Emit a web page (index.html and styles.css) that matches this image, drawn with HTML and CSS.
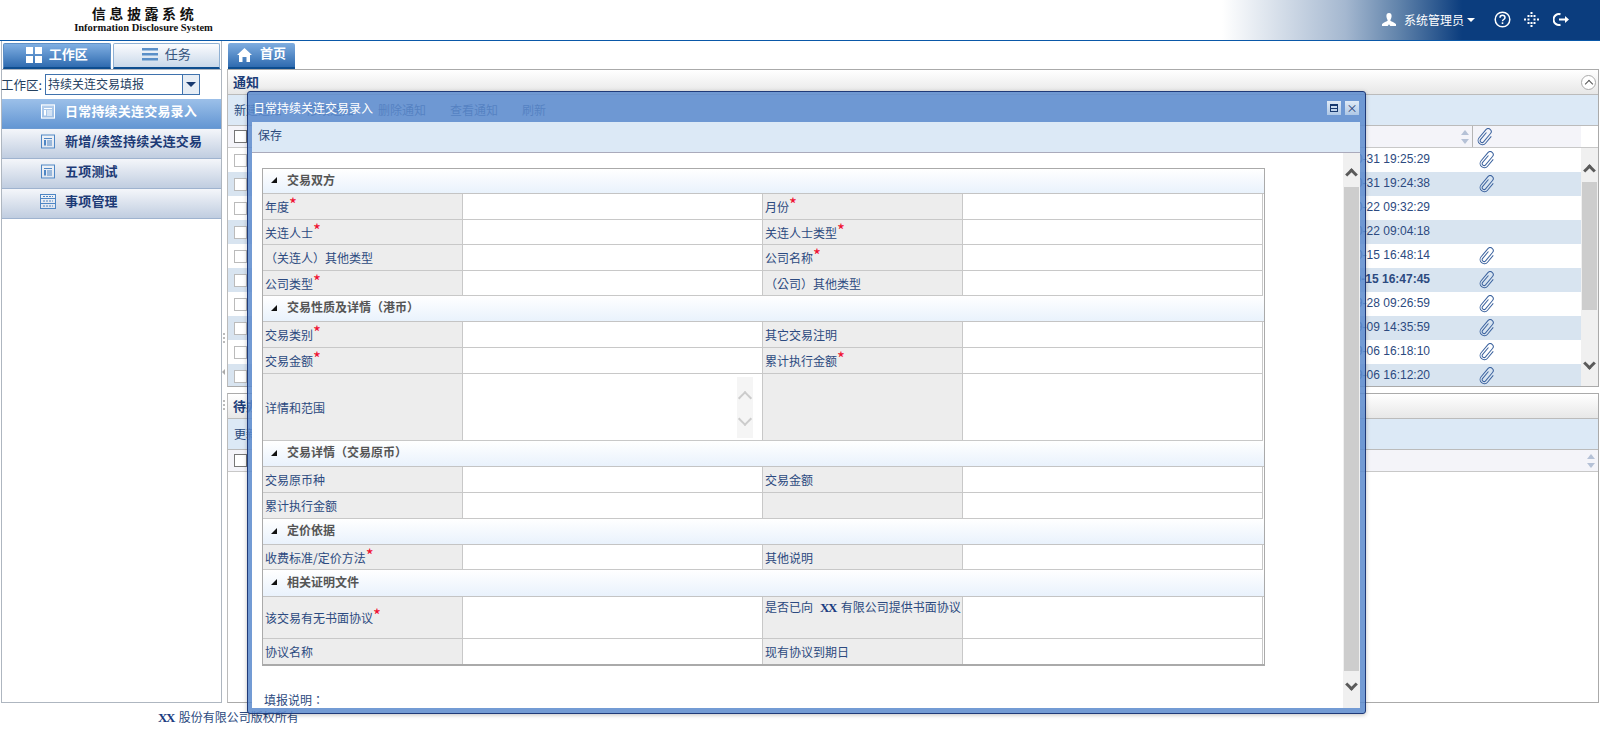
FILE: index.html
```html
<!DOCTYPE html>
<html lang="zh">
<head>
<meta charset="utf-8">
<title>信息披露系统</title>
<link rel="stylesheet" href="styles.css">
</head>
<body>
<svg class="defs" width="0" height="0">
  <symbol id="clip" viewBox="0 0 18 18">
    <g transform="rotate(40 9 9)"><path d="M7.2 4.6v9a1.9 1.9 0 0 0 3.8 0V2.8a3 3 0 0 0-6 0v10.6a4.2 4.2 0 0 0 8.4 0V4.5" fill="none" stroke="currentColor" stroke-width="1"/></g>
  </symbol>
  <symbol id="doc" viewBox="0 0 14 14">
    <rect x=".5" y=".5" width="13" height="13" fill="none" stroke="currentColor"/>
    <path d="M3 3.5h8v1H3zM3 5.5h2v5.5H3zM6 6h5v1H6zM6 8h5v1H6zM6 10h5v1H6z" fill="currentColor"/>
  </symbol>
</svg>

<header class="topbar">
  <div class="logo">
    <div class="logo-cn">信息披露系统</div>
    <div class="logo-en">Information Disclosure System</div>
  </div>
  <div class="topbar-tools">
    <svg class="ico-user" width="14" height="13" viewBox="0 0 14 13"><path d="M7 0c1.8 0 2.6 1.3 2.6 3S8.700 6.500 8.300 7.200c0 1 3.700 2 5.700 3.800V13H8.300L7 11.300 5.700 13H0v-2c2-1.800 5.700-2.800 5.700-3.800C5.300 6.500 4.400 4.700 4.400 3S5.200 0 7 0z" fill="#fff"/></svg>
    <span class="user-name">系统管理员</span>
    <span class="caret"></span>
    <svg class="ico-help" width="17" height="17" viewBox="0 0 17 17"><circle cx="8.500" cy="8.500" r="7.300" fill="none" stroke="#fff" stroke-width="1.500"/><path d="M6 6.700c0-3.200 5-3.200 5 0 0 1.800-2.500 1.800-2.500 3.500" fill="none" stroke="#fff" stroke-width="1.500"/><rect x="7.700" y="11.300" width="1.600" height="1.700" fill="#fff"/></svg>
    <svg class="ico-dots" width="15" height="15" viewBox="0 0 15 15" fill="#fff"><rect x="6.500" y="0" width="2" height="2"/><rect x="3.500" y="3" width="2" height="2"/><rect x="6.500" y="3" width="2" height="2"/><rect x="9.500" y="3" width="2" height="2"/><rect x="0" y="6.500" width="2" height="2"/><rect x="3.500" y="6.500" width="2" height="2"/><rect x="9.500" y="6.500" width="2" height="2"/><rect x="13" y="6.500" width="2" height="2"/><rect x="3.500" y="10" width="2" height="2"/><rect x="6.500" y="10" width="2" height="2"/><rect x="9.500" y="10" width="2" height="2"/><rect x="6.500" y="13" width="2" height="2"/></svg>
    <svg class="ico-exit" width="16" height="15" viewBox="0 0 16 15"><path d="M7.500 2.200A5.500 5.500 0 1 0 7.500 12.800" fill="none" stroke="#fff" stroke-width="2"/><path d="M6 6.500h6V4l4 3.500-4 3.500V8.500H6z" fill="#fff"/></svg>
  </div>
</header>

<main class="main">
  <aside class="side">
    <div class="side-tabs">
      <div class="side-tab active">
        <svg width="16" height="16" viewBox="0 0 16 16" fill="#fff"><rect width="7" height="7"/><rect x="9" width="7" height="7"/><rect y="9" width="7" height="7"/><rect x="9" y="9" width="7" height="7"/></svg>
        <span>工作区</span>
      </div>
      <div class="side-tab">
        <svg width="16" height="13" viewBox="0 0 16 13" fill="#5a8fc8"><rect width="16" height="2.500"/><rect y="5" width="16" height="2.500"/><rect y="10" width="16" height="2.500"/></svg>
        <span>任务</span>
      </div>
    </div>
    <div class="workspace">
      <span class="ws-label">工作区:</span>
      <div class="ws-select"><span class="ws-value">持续关连交易填报</span><span class="ws-btn"></span></div>
    </div>
    <nav class="menu">
      <div class="menu-item active"><svg class="mi" width="14" height="15"><use href="#doc"/></svg><span>日常持续关连交易录入</span></div>
      <div class="menu-item"><svg class="mi" width="14" height="15"><use href="#doc"/></svg><span>新增/续签持续关连交易</span></div>
      <div class="menu-item"><svg class="mi" width="14" height="15"><use href="#doc"/></svg><span>五项测试</span></div>
      <div class="menu-item">
        <svg class="mi wide" width="16" height="15" viewBox="0 0 16 15"><rect x=".5" y=".5" width="15" height="14" fill="none" stroke="currentColor"/><path d="M1 4.500h14M1 9.500h14" stroke="currentColor"/><path d="M3 2.500h10M3 7h10M3 12h10" stroke="currentColor" stroke-dasharray="2 1"/></svg>
        <span>事项管理</span>
      </div>
    </nav>
  </aside>

  <div class="splitter">
    <span class="grip g1"></span>
    <span class="split-arrow"></span>
    <span class="grip g2"></span>
  </div>

  <section class="content">
    <div class="page-tabs">
      <div class="page-tab">
        <svg width="15" height="14" viewBox="0 0 15 14" fill="#fff"><path d="M7.500 0L15 7h-2v7H9.500V9h-4v5H2V7H0z"/></svg>
        <span>首页</span>
      </div>
    </div>
    <div class="panel panel-top">
      <div class="panel-head"><span>通知</span><span class="collapse"></span></div>
      <div class="panel-bar">
        <span>新建通知</span><span>修改通知</span><span>删除通知</span><span>查看通知</span><span>刷新</span>
      </div>
      <div class="thead">
        <span class="chk dark"></span>
        <span class="th-fill"></span>
        <span class="sort"></span>
        <span class="th-clip"><svg width="18" height="18"><use href="#clip"/></svg></span>
      </div>
      <div class="tbody-wrap">
        <div class="tbody">
          <div class="tr"><span class="chk"></span><span class="date">2017-10-31 19:25:29</span><span class="clipcell"><svg width="18" height="18"><use href="#clip"/></svg></span></div>
          <div class="tr alt"><span class="chk"></span><span class="date">2017-10-31 19:24:38</span><span class="clipcell"><svg width="18" height="18"><use href="#clip"/></svg></span></div>
          <div class="tr"><span class="chk"></span><span class="date">2017-10-22 09:32:29</span><span class="clipcell"></span></div>
          <div class="tr alt"><span class="chk"></span><span class="date">2017-10-22 09:04:18</span><span class="clipcell"></span></div>
          <div class="tr"><span class="chk"></span><span class="date">2017-10-15 16:48:14</span><span class="clipcell"><svg width="18" height="18"><use href="#clip"/></svg></span></div>
          <div class="tr alt bold"><span class="chk"></span><span class="date">2017-10-15 16:47:45</span><span class="clipcell"><svg width="18" height="18"><use href="#clip"/></svg></span></div>
          <div class="tr"><span class="chk"></span><span class="date">2017-09-28 09:26:59</span><span class="clipcell"><svg width="18" height="18"><use href="#clip"/></svg></span></div>
          <div class="tr alt"><span class="chk"></span><span class="date">2017-09-09 14:35:59</span><span class="clipcell"><svg width="18" height="18"><use href="#clip"/></svg></span></div>
          <div class="tr"><span class="chk"></span><span class="date">2017-09-06 16:18:10</span><span class="clipcell"><svg width="18" height="18"><use href="#clip"/></svg></span></div>
          <div class="tr alt"><span class="chk"></span><span class="date">2017-09-06 16:12:20</span><span class="clipcell"><svg width="18" height="18"><use href="#clip"/></svg></span></div>
        </div>
        <div class="vscroll">
          <span class="chev up"></span>
          <span class="thumb"></span>
          <span class="chev down"></span>
        </div>
      </div>
    </div>
    <div class="panel panel-bottom">
      <div class="panel-head"><span>待办</span></div>
      <div class="panel-bar"><span>更新</span></div>
      <div class="thead full">
        <span class="chk dark"></span>
        <span class="th-fill"></span>
        <span class="sort"></span>
      </div>
    </div>
  </section>
</main>

<footer class="foot"><b>XX</b><span class="foot-text">股份有限公司版权所有</span></footer>

<div class="modal">
  <div class="modal-title">
    <span>日常持续关连交易录入</span>
    <span class="win-btns">
      <span class="win-btn"><i class="restore"></i></span>
      <span class="win-btn close">×</span>
    </span>
  </div>
  <div class="modal-inner">
    <div class="modal-bar">保存</div>
    <div class="modal-body">
      <div class="form">
        <div class="sec first"><i class="tri"></i>交易双方</div>
        <div class="row h26"><div class="lb">年度<em>*</em></div><div class="val"></div><div class="lb">月份<em>*</em></div><div class="val"></div></div>
        <div class="row h25"><div class="lb">关连人士<em>*</em></div><div class="val"></div><div class="lb">关连人士类型<em>*</em></div><div class="val"></div></div>
        <div class="row h26"><div class="lb tc" lang="zh-Hant">（关连人）其他类型</div><div class="val"></div><div class="lb">公司名称<em>*</em></div><div class="val"></div></div>
        <div class="row h25"><div class="lb">公司类型<em>*</em></div><div class="val"></div><div class="lb tc" lang="zh-Hant">（公司）其他类型</div><div class="val"></div></div>
        <div class="sec tc" lang="zh-Hant"><i class="tri"></i>交易性质及详情（港币）</div>
        <div class="row h26"><div class="lb">交易类别<em>*</em></div><div class="val"></div><div class="lb">其它交易注明</div><div class="val"></div></div>
        <div class="row h26"><div class="lb">交易金额<em>*</em></div><div class="val"></div><div class="lb">累计执行金额<em>*</em></div><div class="val"></div></div>
        <div class="row h67"><div class="lb">详情和范围</div><div class="val ta"><span class="ta-scroll"><span class="chev up light"></span><span class="chev down light"></span></span></div><div class="lb"></div><div class="val"></div></div>
        <div class="sec tc" lang="zh-Hant"><i class="tri"></i>交易详情（交易原币）</div>
        <div class="row h26"><div class="lb">交易原币种</div><div class="val"></div><div class="lb">交易金额</div><div class="val"></div></div>
        <div class="row h26"><div class="lb">累计执行金额</div><div class="val"></div><div class="lb"></div><div class="val"></div></div>
        <div class="sec"><i class="tri"></i>定价依据</div>
        <div class="row h25"><div class="lb">收费标准/定价方法<em>*</em></div><div class="val"></div><div class="lb">其他说明</div><div class="val"></div></div>
        <div class="sec tall"><i class="tri"></i>相关证明文件</div>
        <div class="row h42"><div class="lb">该交易有无书面协议<em>*</em></div><div class="val"></div><div class="lb top"><span>是否已向<b class="xx">XX</b>有限公司提供书面协议</span></div><div class="val"></div></div>
        <div class="row h25 last"><div class="lb">协议名称</div><div class="val"></div><div class="lb">现有协议到期日</div><div class="val"></div></div>
      </div>
      <div class="note tc" lang="zh-Hant">填报说明：</div>
      <div class="vscroll modal-scroll">
        <span class="chev up"></span>
        <span class="thumb"></span>
        <span class="chev down"></span>
      </div>
    </div>
  </div>
</div>
</body>
</html>
```
FILE: styles.css
```css
* { box-sizing: border-box; }
html, body { margin: 0; padding: 0; }
body {
  width: 1600px;
  height: 729px;
  overflow: hidden;
  position: relative;
  display: flex;
  flex-direction: column;
  background: #fff;
  color: #1c3d78;
  font: 12px "Noto Sans CJK SC", "Liberation Sans", sans-serif;
}
.defs { position: absolute; }
.tc { font-family: "Noto Sans CJK TC", "Noto Sans CJK SC", sans-serif; }

/* top bar */
.topbar {
  height: 41px;
  flex: none;
  display: flex;
  align-items: center;
  justify-content: space-between;
  border-bottom: 1px solid #0a58a8;
  background: linear-gradient(90deg, #fff 0, #fff 1222px, #a5b8d0 1345px, #5f82aa 1400px, #0b3d7e 1462px, #0b3d7e 100%);
}
.logo { width: 140px; margin-left: 74px; text-align: center; color: #111; align-self: flex-start; }
.logo-cn { font-size: 14px; font-weight: 700; letter-spacing: 3.6px; line-height: 16px; margin-top: 5px; padding-left: 1px; }
.logo-en { font: 700 10.500px/11px "Liberation Serif", serif; white-space: nowrap; margin-top: 1px; margin-left: -1px; }
.topbar-tools { display: flex; align-items: center; padding-right: 31px; color: #fff; padding-bottom: 1px; }
.user-name { margin-left: 8px; font-size: 12px; padding-bottom: 1px; }
.caret { margin-left: 3px; border: 4px solid transparent; border-top: 4px solid #fff; border-bottom: 0; width: 0; height: 0; }
.ico-help { margin-left: 19px; }
.ico-dots { margin-left: 13px; }
.ico-exit { margin-left: 14px; }

/* main layout */
.main { flex: none; height: 662px; display: flex; }
.side {
  width: 221px;
  margin-left: 1px;
  flex: none;
  border: 1px solid #aeb6c0;
  border-top: 0;
  display: flex;
  flex-direction: column;
}
.side-tabs { display: flex; gap: 2px; padding: 2px 1px 0 1px; height: 28px; flex: none; }
.side-tab {
  flex: 1;
  height: 26px;
  display: flex;
  align-items: center;
  justify-content: center;
  gap: 7px;
  font-size: 13px;
  color: #35557f;
  background: linear-gradient(#fbfcfe, #c9d8ea);
  border: 1px solid #8fb0d3;
  border-bottom: 2px solid #0d4d8f;
  border-radius: 2px 2px 0 0;
}
.side-tab span { padding-bottom: 5px; }
.side-tab svg { margin-bottom: 2px; }
.side-tab.active { background: linear-gradient(#80afe2, #2f6bb0); color: #fff; font-weight: 700; border-color: #5d8fc6; border-bottom-color: #0d4d8f; }
.workspace { height: 30px; flex: none; display: flex; align-items: center; border-top: 1px solid #aeb6c0; }
.ws-label { font-size: 12.500px; width: 43px; color: #24405f; white-space: nowrap; margin-left: -1px; padding-bottom: 1px; margin-right: 1px; }
.ws-select { width: 155px; height: 21px; border: 1px solid #3f72ad; display: flex; justify-content: space-between; }
.ws-value { padding-left: 2px; line-height: 18px; font-size: 12px; color: #24405f; }
.ws-btn { width: 17px; border-left: 1px solid #3f72ad; background: #e6edf5; position: relative; }
.ws-btn::after { content: ""; position: absolute; left: 3px; top: 7px; border: 5px solid transparent; border-top: 5px solid #17396f; border-bottom: 0; }
.menu { display: flex; flex-direction: column; }
.menu-item {
  height: 30px;
  display: flex;
  align-items: center;
  padding-left: 39px;
  font-size: 13px;
  letter-spacing: .2px;
  font-weight: 700;
  color: #1c3a76;
  background: linear-gradient(#f4f6fa, #c0cde0);
  border-bottom: 1px solid #9fb3cf;
}
.menu-item span { padding-bottom: 7px; }
.menu-item.active { background: linear-gradient(#9cc0e9, #6396d3); color: #fff; border-bottom-color: #6b9ad2; }
.mi { color: #4e86c4; margin-right: 10px; margin-bottom: 4px; background: rgba(255,255,255,.3); flex: none; }
.mi.wide { margin-left: -1px; margin-right: 9px; }
.menu-item.active .mi { color: #fff; }

.splitter { width: 5px; flex: none; position: relative; }
.grip { position: absolute; left: 1px; width: 2px; height: 10px; background: repeating-linear-gradient(#bbb 0 2px, transparent 2px 4px); }
.g1 { top: 292px; }
.g2 { top: 359px; }
.split-arrow { position: absolute; left: 0; top: 328px; border: 3px solid transparent; border-right: 3px solid #aaa; border-left: 0; }

.content { flex: 1; min-width: 0; display: flex; flex-direction: column; }
.page-tabs { height: 28px; flex: none; padding: 2px 0 0 1px; }
.page-tab {
  width: 67px;
  height: 26px;
  display: flex;
  align-items: center;
  justify-content: center;
  gap: 8px;
  font-size: 13px;
  font-weight: 700;
  color: #fff;
  background: linear-gradient(#7fade0, #2f6bb0);
  border-bottom: 2px solid #0d4d8f;
  border-radius: 2px 2px 0 0;
}
.page-tab span { padding-bottom: 5px; }
.page-tab svg { margin-bottom: 1px; }
.panel { border: 1px solid #aaa; border-left-color: #bbb; margin-right: 1px; }
.panel-top { height: 318px; flex: none; overflow: hidden; }
.panel-bottom { margin-top: 6px; flex: 1; }
.panel-head {
  height: 25px;
  display: flex;
  align-items: center;
  justify-content: space-between;
  padding: 0 2px 0 5px;
  font-size: 13px;
  font-weight: 700;
  color: #1c3d78;
  background: linear-gradient(#fff, #e7e7e7);
  border-bottom: 1px solid #bbb;
}
.panel-head > span:first-child { padding-bottom: 2px; }
.collapse { width: 15px; height: 15px; border: 1px solid #aaa; border-radius: 50%; background: #fff; position: relative; }
.collapse::after { content: ""; position: absolute; left: 4px; top: 5px; width: 5px; height: 5px; border-left: 1px solid #555; border-top: 1px solid #555; transform: rotate(45deg); }
.panel-bar { height: 31px; display: flex; align-items: center; gap: 24px; padding: 0 0 2px 6px; background: #dce9f6; border-bottom: 1px solid #bbb; color: #2a4a7c; }
.thead { height: 22px; display: flex; align-items: center; background: #f4f4f9; margin-right: 16px; border-bottom: 1px solid #c8c8c8; padding-left: 6px; }
.thead.full { margin-right: 0; }
.panel-top .thead { margin-right: 0; background: linear-gradient(90deg, #f4f4f9 calc(100% - 17px), #fff calc(100% - 17px)); }
.th-fill { flex: 1; }
.sort { width: 8px; height: 12px; margin-right: 3px; position: relative; flex: none; }
.sort::before, .sort::after { content: ""; position: absolute; left: 0; border: 4px solid transparent; }
.sort::before { top: -1px; border-bottom: 5px solid #b5c1d6; border-top: 0; }
.sort::after { bottom: -1px; border-top: 5px solid #b5c1d6; border-bottom: 0; }
.th-clip { width: 126px; height: 21px; flex: none; border-left: 1px solid #b5b5b5; padding-left: 3px; color: #3c639f; display: flex; align-items: center; }
.chk { width: 13px; height: 13px; flex: none; border: 1px solid #bbb; background: #fff; }
.chk.dark { border-color: #777; }
.tbody-wrap { display: flex; height: 238px; }
.tbody { flex: 1; min-width: 0; overflow: hidden; }
.tr { height: 24px; display: flex; align-items: center; padding-left: 6px; font: 12px "Liberation Sans", sans-serif; color: #2c4a80; }
.tr.alt { background: #d8e4f0; }
.tr.bold { font-weight: 700; }
.date { flex: 1; text-align: right; white-space: nowrap; padding-bottom: 2px; }
.clipcell { width: 151px; padding-left: 48px; flex: none; height: 18px; color: #3c639f; }
.vscroll { width: 17px; flex: none; background: #f0f0f0; position: relative; display: flex; flex-direction: column; align-items: center; }
.thumb { position: absolute; left: 1px; right: 1px; top: 34px; height: 128px; background: #cdcdcd; }
.chev { position: absolute; left: 4px; width: 9px; height: 9px; border-left: 3px solid #5a5a5a; border-top: 3px solid #5a5a5a; }
.chev.up { top: 18px; transform: rotate(45deg); }
.chev.down { bottom: 18px; transform: rotate(225deg); }

/* footer */
.foot { flex: 1; padding: 5px 0 0 158px; font-size: 12px; color: #2c4a80; white-space: nowrap; }
.foot b, .xx { font: 700 13px/1 "Liberation Serif", serif; color: #1a3c80; letter-spacing: -1.500px; }
.foot-text { margin-left: 5px; }
.xx { margin: 0 5px 0 7px; }

/* modal window */
.modal {
  position: absolute;
  left: 247px;
  top: 91px;
  width: 1119px;
  height: 623px;
  border: 1px solid #1f3a78;
  border-radius: 3px;
  background: rgba(92,138,205,.86);
  box-shadow: 0 1px 4px rgba(0,0,0,.25);
  display: flex;
  flex-direction: column;
}
.modal-title {
  height: 30px;
  flex: none;
  display: flex;
  align-items: center;
  justify-content: space-between;
  padding: 0 6px 0 5px;
  color: #fff;
  font-size: 12px;
}
.win-btns { display: flex; gap: 4px; margin-top: 2px; }
.win-btn { width: 14px; height: 14px; background: linear-gradient(#e0eaf6, #aec7e6); display: flex; align-items: center; justify-content: center; color: #17396f; font-size: 11px; line-height: 1; }
.restore { width: 8px; height: 8px; border: 1px solid #17396f; border-top-width: 2px; position: relative; }
.restore::after { content: ""; position: absolute; left: 0; right: 0; top: 2px; height: 1px; background: #17396f; }
.modal-inner { flex: 1; min-height: 0; margin: 0 5px 5px 4px; background: #fff; display: flex; flex-direction: column; }
.modal-bar { height: 31px; flex: none; padding: 0 0 0 6px; line-height: 25px; color: #2a4a7c; background: #dce9f6; border-bottom: 1px solid #aab; }
.modal-body { flex: 1; position: relative; padding: 15px 0 0 10px; overflow: hidden; }
.modal-scroll { position: absolute; right: 0; top: 0; bottom: 0; }
.modal-scroll .thumb { top: 34px; height: 484px; }
.modal-scroll .chev.up { top: 17px; }
.modal-scroll .chev.down { bottom: 19px; }

/* form */
.form { width: 1003px; border: 1px solid #aaa; border-bottom-width: 2px; }
.sec {
  height: 26px;
  display: flex;
  align-items: center;
  padding: 0 0 4px 8px;
  font-weight: 700;
  color: #555;
  background: linear-gradient(#fff, #e9f2fc);
  border-bottom: 1px solid #c4c4c4;
}
.sec.first { height: 25px; }
.sec.tall { height: 27px; }
.tri { width: 0; height: 0; margin: 2px 10px 0 0; border-bottom: 6px solid #111; border-left: 6px solid transparent; }
.row { display: grid; grid-template-columns: 200px 300px 200px 300px; border-bottom: 1px solid #c8c8c8; width: 1000px; }
.h25 { height: 25px; }
.h26 { height: 26px; }
.h42 { height: 42px; }
.h67 { height: 67px; }
.row.last { border-bottom: 0; height: 25px; }
.lb { background: #ededed; border-right: 1px solid #c8c8c8; padding-left: 2px; display: flex; align-items: center; white-space: pre; color: #2c4a80; }
.lb.top { align-items: flex-start; padding-top: 1px; }
.val { border-right: 1px solid #c8c8c8; position: relative; }
em { font-style: normal; color: #f01030; font-size: 17px; position: relative; top: -3px; line-height: 1; }
.ta-scroll { position: absolute; left: 274px; top: 3px; bottom: 2px; width: 16px; background: #f5f5f5; }
.ta-scroll .chev.light { left: 3px; width: 10px; height: 10px; border-left: 2px solid #ccc; border-top: 2px solid #ccc; }
.ta-scroll .chev.up { top: 16px; }
.ta-scroll .chev.down { bottom: 14px; }
.note { margin: 25px 0 0 2px; color: #2c4a80; }
```
